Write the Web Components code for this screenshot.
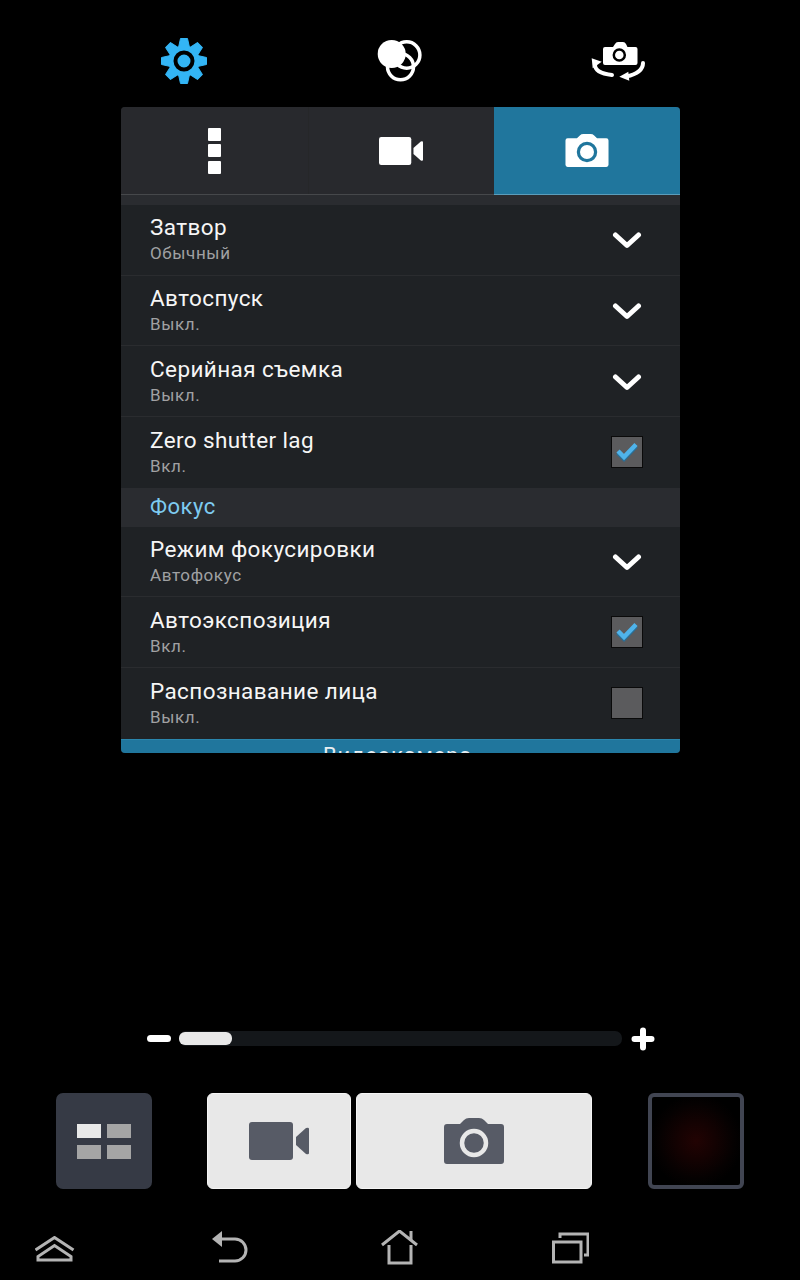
<!DOCTYPE html>
<html>
<head>
<meta charset="utf-8">
<style>
  html, body { margin: 0; padding: 0; background: #000; }
  body { width: 800px; height: 1280px; overflow: hidden; font-family: Roboto, "Liberation Sans", sans-serif; }
</style>
</head>
<body>
<top-icons></top-icons>
<settings-panel>
  <setting-row title="Затвор" sub="Обычный" type="arrow"></setting-row>
  <setting-row title="Автоспуск" sub="Выкл." type="arrow"></setting-row>
  <setting-row title="Серийная съемка" sub="Выкл." type="arrow"></setting-row>
  <setting-row title="Zero shutter lag" sub="Вкл." type="on" last></setting-row>
  <section-head>Фокус</section-head>
  <setting-row title="Режим фокусировки" sub="Автофокус" type="arrow"></setting-row>
  <setting-row title="Автоэкспозиция" sub="Вкл." type="on"></setting-row>
  <setting-row title="Распознавание лица" sub="Выкл." type="off" last></setting-row>
  <section-head blue>Видеокамера</section-head>
</settings-panel>
<zoom-bar></zoom-bar>
<shutter-bar></shutter-bar>
<nav-bar></nav-bar>

<script>
const CAMERA = (fg, hole) => `
  <svg viewBox="0 0 60 46" width="60" height="46">
    <path fill="${fg}" d="M3 6h13l4-4q2-2 5-2h10q3 0 5 2l4 4h13q3 0 3 3v34q0 3-3 3H3q-3 0-3-3V9q0-3 3-3z"/>
    <circle cx="30" cy="25" r="12" fill="none" stroke="${hole}" stroke-width="4.5"/>
  </svg>`;
const VIDEO = (fg) => `
  <svg viewBox="0 0 60 38" width="60" height="38">
    <rect width="44" height="38" rx="3" fill="${fg}"/>
    <path fill="${fg}" d="M47 15 L57 6 q3-1 3 1 V31 q0 2-3 1 L47 23z"/>
  </svg>`;
const TOOTH = "M19.5 0.5h7l2 9h-11z";

class TopIcons extends HTMLElement {
  constructor() {
    super();
    const teeth = [0, 45, 90, 135, 180, 225, 270, 315]
      .map(a => `<path transform="rotate(${a} 23 23)" d="${TOOTH}" stroke="#33b5f5" stroke-width="1" stroke-linejoin="round"/>`)
      .join("");
    this.attachShadow({ mode: "open" }).innerHTML = `
      <style>
        :host { display: grid; grid-template-columns: 368px 216px 216px; height: 107px; box-sizing: border-box; padding-top: 38px; }
        div { display: flex; height: 48px; }
        .a { justify-content: flex-end; padding-right: 161px; }
        .b { padding-left: 9px; }
        .c { padding-left: 6px; }
      </style>
      <div class="a">
        <svg width="46" height="46" viewBox="0 0 46 46">
          <g fill="#33b5f5">${teeth}<circle cx="23" cy="23" r="15.5"/></g>
          <circle cx="23" cy="23" r="8.5" fill="#33b5f5" stroke="#000" stroke-width="4"/>
        </svg>
      </div>
      <div class="b">
        <svg width="46" height="46" viewBox="0 0 46 46">
          <circle cx="29.7" cy="17" r="13.2" fill="none" stroke="#fff" stroke-width="3.5"/>
          <circle cx="23.5" cy="28.7" r="13" fill="none" stroke="#fff" stroke-width="3.5"/>
          <circle cx="14.7" cy="16" r="14" fill="#fff"/>
        </svg>
      </div>
      <div class="c">
        <svg width="56" height="46" viewBox="0 0 56 46">
          <path fill="#fff" d="M15 9h8l2-3q1-2 3-2h5q2 0 3 2l1.5 3h8q2 0 2 2v14q0 2-2 2H15q-2 0-2-2V11q0-2 2-2z"/>
          <circle cx="29.3" cy="17" r="5.5" fill="none" stroke="#000" stroke-width="2.5"/>
          <path fill="none" stroke="#fff" stroke-width="4" stroke-linecap="round" d="M5 27 Q5 35 22 37"/>
          <path fill="#fff" d="M1.7 20.3 L11.7 23.7 L2.7 30.3z"/>
          <path fill="none" stroke="#fff" stroke-width="4" stroke-linecap="round" d="M53 25 Q53 35 36 38.5"/>
          <path fill="#fff" d="M29.3 38.7 L38.3 33.7 L39.3 42.7z"/>
        </svg>
      </div>`;
  }
}
customElements.define("top-icons", TopIcons);

class SettingsPanel extends HTMLElement {
  constructor() {
    super();
    this.attachShadow({ mode: "open" }).innerHTML = `
      <style>
        :host { display: block; width: 559px; height: 646px; margin-left: 121px; border-radius: 4px; overflow: hidden; background: #1f2225; }
        .tabs { display: grid; grid-template-columns: 187px 186px 186px; height: 87px; background: #28292d; }
        .tabs div { display: flex; align-items: center; justify-content: center; }
        .tabs div + div { box-shadow: inset 1px 0 0 #262729; }
        .tabs .on { background: #20769d; box-shadow: none; }
        .dots { flex-direction: column; gap: 3.5px; }
        .dots i { display: block; width: 13px; height: 13px; background: #fff; border-radius: 1px; }
        .rule { height: 1px; background: linear-gradient(90deg, #46484b 373px, #5b9dbb 373px); }
        .band { height: 10px; background: #2a2c30; }
      </style>
      <div class="tabs">
        <div class="dots"><i></i><i></i><i></i></div>
        <div>${VIDEO("#fff").replace('width="60" height="38"', 'width="44" height="28"')}</div>
        <div class="on">${CAMERA("#fff", "#20769d").replace('width="60" height="46"', 'width="44" height="33"')}</div>
      </div>
      <div class="rule"></div>
      <div class="band"></div>
      <slot></slot>`;
  }
}
customElements.define("settings-panel", SettingsPanel);

class SettingRow extends HTMLElement {
  constructor() {
    super();
    this.attachShadow({ mode: "open" });
  }
  connectedCallback() {
    const type = this.getAttribute("type");
    let ctl = "";
    if (type === "arrow") {
      ctl = `<svg width="30" height="20" viewBox="0 0 30 20"><path d="M3.5 6 L15 16.5 L26.5 6" fill="none" stroke="#fff" stroke-width="5" stroke-linecap="round" stroke-linejoin="round"/></svg>`;
    } else {
      ctl = `<span class="box">${type === "on" ? `<svg width="30" height="30" viewBox="0 0 30 30"><path d="M6 15.5 L12 21.5 L24 9" fill="none" stroke="#2b6f96" stroke-width="5"/><path d="M6 14 L12 20 L24 7.5" fill="none" stroke="#4fb3ea" stroke-width="4.5"/></svg>` : ""}</span>`;
    }
    this.shadowRoot.innerHTML = `
      <style>
        :host { display: flex; align-items: center; justify-content: space-between; box-sizing: border-box; height: 70.7px; padding: 0 37px 1px 29px; color: #fff; }
        :host(:not([last])) { border-bottom: 1px solid #2a2c2f; }
        .title { font-size: 22.5px; line-height: 28px; letter-spacing: .4px; color: #f6f6f6; }
        .sub { font-size: 17px; line-height: 24px; color: #a0a1a3; letter-spacing: .6px; }
        .ctl { display: flex; width: 32px; justify-content: center; }
        .box { display: block; width: 30px; height: 30px; border: 1px solid #0a0a0a; background: #5b5b5d; }
        svg { display: block; }
      </style>
      <div><div class="title">${this.getAttribute("title")}</div><div class="sub">${this.getAttribute("sub")}</div></div>
      <div class="ctl">${ctl}</div>`;
  }
}
customElements.define("setting-row", SettingRow);

class SectionHead extends HTMLElement {
  constructor() {
    super();
    this.attachShadow({ mode: "open" }).innerHTML = `
      <style>
        :host { display: block; box-sizing: border-box; height: 38.8px; padding-left: 29px; background: #2a2c30; color: #7ecbf0; font-size: 22px; line-height: 38px; letter-spacing: .5px; overflow: hidden; }
        :host([blue]) { background: #20769d; color: #e8eef2; height: 15px; border-top: 1px solid #2a86ad; padding: 0 6px 0 0; text-align: center; font-size: 22px; line-height: 32px; letter-spacing: .8px; }
      </style>
      <slot></slot>`;
  }
}
customElements.define("section-head", SectionHead);

class ZoomBar extends HTMLElement {
  constructor() {
    super();
    this.attachShadow({ mode: "open" }).innerHTML = `
      <style>
        :host { display: flex; align-items: center; height: 17px; margin-top: 277px; padding-left: 147px; }
        .minus { width: 24px; height: 7px; border-radius: 4px; background: #fff; margin-right: 8px; }
        .track { display: flex; align-items: center; width: 443px; height: 15px; border-radius: 7px; background: #14171a; }
        .thumb { width: 53px; height: 13px; border-radius: 6px; background: #e8e8e8; }
        svg { margin-left: 9px; flex: none; }
      </style>
      <div class="minus"></div>
      <div class="track"><div class="thumb"></div></div>
      <svg width="24" height="24" viewBox="0 0 24 24"><path d="M12 3.5V20.5M3.5 12H20.5" stroke="#fff" stroke-width="6" stroke-linecap="round"/></svg>`;
  }
}
customElements.define("zoom-bar", ZoomBar);

class ShutterBar extends HTMLElement {
  constructor() {
    super();
    this.attachShadow({ mode: "open" }).innerHTML = `
      <style>
        :host { display: flex; height: 96px; margin-top: 46px; padding-left: 56px; }
        .mode { width: 96px; height: 96px; border-radius: 7px; background: #363a45; display: grid; grid-template-columns: 24px 24px; grid-template-rows: 14px 14px; gap: 7px 6px; place-content: center; }
        .mode i { background: #a5a5a5; }
        .mode i:first-child { background: #e8e8e8; }
        .btn { display: flex; align-items: center; justify-content: center; background: #e8e8e8; border: 1px solid #f5f5f5; border-radius: 6px; height: 96px; box-sizing: border-box; }
        .rec { width: 144px; margin-left: 55px; }
        .shot { width: 236px; margin-left: 5px; }
        .thumb { width: 96px; height: 96px; margin-left: 56px; box-sizing: border-box; border: 4px solid #414552; border-radius: 6px; background: radial-gradient(circle at 50% 50%, #220303 0, #140202 30%, #050101 60%, #000 75%); }
      </style>
      <div class="mode"><i></i><i></i><i></i><i></i></div>
      <div class="btn rec">${VIDEO("#575b66")}</div>
      <div class="btn shot">${CAMERA("#575b66", "#e8e8e8")}</div>
      <div class="thumb"></div>`;
  }
}
customElements.define("shutter-bar", ShutterBar);

class NavBar extends HTMLElement {
  constructor() {
    super();
    const s = 'fill="none" stroke="#b4b4b4" stroke-width="3"';
    this.attachShadow({ mode: "open" }).innerHTML = `
      <style>
        :host { display: flex; height: 42px; margin-top: 39px; padding-left: 35px; align-items: flex-start; }
        svg { display: block; flex: none; }
      </style>
      <svg width="40" height="26" viewBox="0 0 40 26" style="margin-top:8px">
        <path ${s} d="M0.5 14 L19.5 1.5 L38.5 14"/>
        <path ${s} d="M3 24 V20.5 L19.5 9.5 L36 20.5 V24 Z"/>
      </svg>
      <svg width="36" height="33" viewBox="0 0 36 33" style="margin-left:137px;margin-top:3px">
        <path fill="#b4b4b4" d="M0 8 L10 0 V16 Z"/>
        <path ${s} d="M9 8 H23 A11 11 0 0 1 23 30 H7"/>
      </svg>
      <svg width="38" height="36" viewBox="0 0 38 36" style="margin-left:133px;margin-top:2px">
        <path ${s} d="M1 15 L18.5 1 L36 15"/>
        <path ${s} d="M30 1 V11"/>
        <path ${s} d="M8 15 V33 H30 V15"/>
      </svg>
      <svg width="38" height="34" viewBox="0 0 38 34" style="margin-left:132px;margin-top:3px">
        <path ${s} d="M9 7 V3 H37 V24 H33"/>
        <path ${s} d="M2.5 11 H30 V31 H2.5 Z"/>
      </svg>`;
  }
}
customElements.define("nav-bar", NavBar);
</script>
</body>
</html>
